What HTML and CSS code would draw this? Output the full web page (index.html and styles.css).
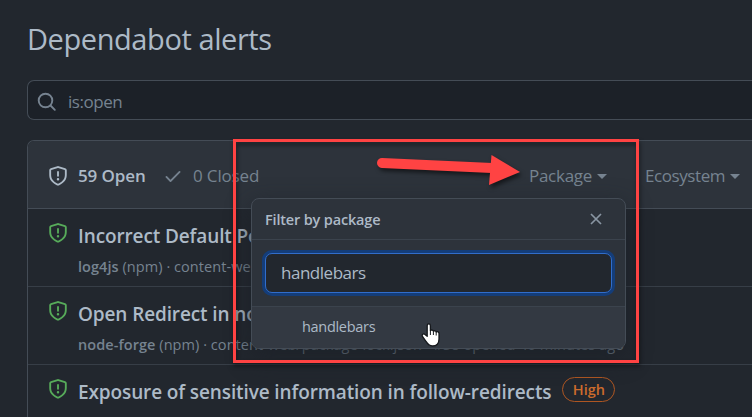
FILE: index.html
```html
<!DOCTYPE html>
<html lang="en">
<head>
<meta charset="utf-8">
<title>Dependabot alerts</title>
<link rel="stylesheet" href="styles.css">
</head>
<body>
<svg width="0" height="0" class="defs">
  <symbol id="shield" viewBox="0 0 16 16"><path d="M8.533.133a1.75 1.75 0 0 0-1.066 0l-5.25 1.68A1.75 1.75 0 0 0 1 3.48V7c0 1.566.32 3.182 1.303 4.682.983 1.498 2.585 2.813 5.032 3.855a1.697 1.697 0 0 0 1.33 0c2.447-1.042 4.049-2.357 5.032-3.855C14.68 10.182 15 8.566 15 7V3.48a1.75 1.75 0 0 0-1.217-1.667L8.533.133Zm-.61 1.429a.25.25 0 0 1 .153 0l5.25 1.68a.25.25 0 0 1 .174.238V7c0 1.358-.275 2.666-1.057 3.86-.784 1.194-2.121 2.34-4.366 3.297a.196.196 0 0 1-.154 0c-2.245-.956-3.582-2.104-4.366-3.298C2.775 9.666 2.5 8.36 2.5 7V3.48a.25.25 0 0 1 .174-.237l5.25-1.68ZM8.75 4.75a.75.75 0 0 0-1.5 0v3a.75.75 0 0 0 1.5 0v-3ZM9 10.5a1 1 0 1 1-2 0 1 1 0 0 1 2 0Z"/></symbol>
</svg>
<main class="page">
  <h1>Dependabot alerts</h1>
  <div class="search">
    <svg viewBox="0 0 20 20"><circle cx="8.500" cy="8.500" r="6.800"/><path d="M13.500 13.500l4.300 4.300"/></svg>
    <span>is:open</span>
  </div>
  <section class="card">
    <header class="bar">
      <svg class="shield"><use href="#shield"/></svg>
      <strong class="open">59 Open</strong>
      <svg class="check" viewBox="0 0 16 16"><path d="M13.78 4.22a.75.75 0 0 1 0 1.06l-7.25 7.25a.75.75 0 0 1-1.06 0L2.22 9.28a.75.75 0 0 1 1.06-1.06L6 10.94l6.72-6.72a.75.75 0 0 1 1.06 0Z"/></svg>
      <span class="closed">0 Closed</span>
      <nav class="filters">
        <span class="package">Package</span><i class="caret"></i>
        <span class="ecosystem">Ecosystem</span><i class="caret"></i>
      </nav>
    </header>
    <article class="row">
      <svg class="shield green"><use href="#shield"/></svg>
      <div>
        <h2>Incorrect Default Pe</h2>
        <p><b>log4js</b> (npm) · content-web</p>
      </div>
    </article>
    <article class="row">
      <svg class="shield green"><use href="#shield"/></svg>
      <div>
        <h2>Open Redirect in no</h2>
        <p><b>node-forge</b> (npm) · content-web/package-lock.json · #38 opened 46 minutes ago</p>
      </div>
    </article>
    <article class="row">
      <svg class="shield green"><use href="#shield"/></svg>
      <div class="titleline">
        <h2>Exposure of sensitive information in follow-redirects</h2>
        <span class="badge">High</span>
      </div>
    </article>
  </section>
</main>

<aside class="popover">
  <div class="pophead">
    <span>Filter by package</span>
    <svg viewBox="0 0 12 12"><path d="M1 1l10 10M11 1L1 11"/></svg>
  </div>
  <div class="field"><div class="input">handlebars</div></div>
  <div class="option">handlebars</div>
</aside>

<div class="frame"></div>
<svg class="arrow" viewBox="0 0 160 45">
  <path d="M12 13L122 18" stroke="#ff4343" stroke-width="10" stroke-linecap="round"/>
  <path d="M121.500 5L150 22L119 35Z" fill="#ff4343"/>
</svg>
<svg class="hand" viewBox="0 0 20 26">
  <path d="M6.200 12.500V3.700C6.200 1.300 9.400 1.300 9.400 3.700V8.500C10.400 7.600 12.100 8 12.400 9.200C13.400 8.300 15 8.800 15.200 10C16.500 9.300 18 10 18 11.500V17C18 21.500 15.500 24 11.500 24C7.500 24 6.300 21.500 4.600 18.800L1.500 14.500C.4 12.600 2.600 11.300 4 12.400L6.200 14.300Z"/>
  <path class="fingers" d="M9.400 8.500V13M12.400 9.200V13M15.200 10V13.500"/>
</svg>
</body>
</html>
```
FILE: styles.css
```css
* { box-sizing: border-box; }
html { overflow: hidden; }
body {
  margin: 0;
  width: 752px;
  height: 417px;
  overflow: hidden;
  position: relative;
  background: #22272e;
  color: #adbac7;
  font-family: "Open Sans", "Noto Sans", sans-serif;
}
.defs { position: absolute; }
h1, h2, p { margin: 0; white-space: nowrap; }
.page { height: 417px; padding: 16px 0 0 27px; overflow: hidden; }
h1 {
  height: 64px;
  font-size: 29px;
  font-weight: 400;
  line-height: 45px;
  letter-spacing: -0.42px;
}
.search {
  height: 40px;
  display: flex;
  align-items: center;
  padding-left: 9px;
  gap: 11px;
  border: 1px solid #444c56;
  border-right: 0;
  border-radius: 7px 0 0 7px;
  background: #1c2128;
  color: #768390;
  font-size: 17px;
  letter-spacing: -0.45px;
}
.search svg { width: 20px; height: 20px; margin-top: 4px; fill: none; stroke: #768390; stroke-width: 1.900; stroke-linecap: round; }
.search span { padding-top: 2px; }
.card {
  height: 320px;
  margin-top: 20px;
  border: 1px solid #444c56;
  border-right: 0;
  border-radius: 7px 0 0 7px;
}
.bar {
  display: flex;
  align-items: center;
  height: 68px;
  padding: 3px 0 0 20px;
  border-radius: 6px 0 0 0;
  border-bottom: 1px solid #444c56;
  background: #2d333b;
  color: #768390;
  font-size: 17px;
}
.bar > *, .filters > * { flex: none; white-space: nowrap; }
.open, .closed, .package, .ecosystem { padding-bottom: 2px; }
.shield { width: 20px; height: 20px; fill: #adbac7; flex: none; }
.green { fill: #57ab5a; }
.open { width: 85px; margin-left: 10px; color: #adbac7; font-weight: 600; letter-spacing: -0.1px; }
.check { width: 20px; height: 20px; fill: #768390; }
.closed { margin-left: 10px; width: 336px; letter-spacing: -0.15px; }
.filters { display: flex; align-items: center; letter-spacing: -0.28px; }
.package { width: 68px; }
.ecosystem { margin-left: 38px; width: 85px; letter-spacing: -0.42px; }
.caret { width: 10px; border: 5px solid transparent; border-top-color: #768390; border-bottom: 0; }
.row {
  display: flex;
  gap: 10px;
  height: 78px;
  padding: 14px 0 0 20px;
  border-bottom: 1px solid #373e47;
}
.row > div { margin-top: -1px; }
h2 { font-size: 19px; line-height: 28px; font-weight: 600; letter-spacing: -0.12px; }
.row p { margin-top: 6px; color: #768390; font-size: 14.500px; line-height: 22px; letter-spacing: 0.06px; }
.row p b { font-weight: 600; }
.titleline { display: flex; align-items: flex-start; gap: 11px; }
.badge {
  width: 53px;
  height: 25px;
  margin-top: -1px;
  border: 1px solid #ae5622;
  border-radius: 13px;
  color: #cc6b2c;
  font-size: 14.500px;
  line-height: 24px;
  font-weight: 600;
  text-align: center;
}
.popover {
  position: absolute;
  left: 251px;
  top: 198px;
  width: 375px;
  height: 151px;
  overflow: hidden;
  border: 1px solid #444c56;
  border-radius: 8px;
  background: #2d333b;
  box-shadow: 0 8px 24px rgba(28, 33, 40, .8);
}
.pophead {
  display: flex;
  justify-content: space-between;
  align-items: center;
  height: 41px;
  padding: 0 23px 0 13px;
  border-bottom: 1px solid #3b434d;
  font-size: 14.500px;
  font-weight: 600;
  letter-spacing: -0.17px;
}
.pophead svg { width: 12px; height: 12px; fill: none; stroke: #8995a2; stroke-width: 1.700; }
.field { height: 67px; padding: 13px; border-bottom: 1px solid #3b434d; }
.input {
  height: 40px;
  padding-left: 15px;
  border: 1px solid #316dca;
  border-radius: 7px;
  background: #22272e;
  box-shadow: 0 0 0 3px #143d79;
  font-size: 17px;
  line-height: 38px;
  letter-spacing: -0.48px;
}
.option {
  height: 41px;
  padding-left: 50px;
  background: #333942;
  font-size: 14.500px;
  line-height: 39px;
  letter-spacing: -0.3px;
}
.frame {
  position: absolute;
  left: 233px;
  top: 139px;
  width: 406px;
  height: 224px;
  border: 3px solid #ff4343;
  filter: drop-shadow(1px 3px 2px rgba(0, 0, 0, .5));
}
.arrow { position: absolute; left: 370px; top: 150px; width: 160px; height: 45px; fill: none; filter: drop-shadow(2px 3px 2px rgba(0, 0, 0, .55)); }
.hand { position: absolute; left: 421px; top: 322px; width: 20px; height: 26px; fill: #fff; stroke: #15181c; stroke-width: 1.300; stroke-linejoin: round; }
.fingers { fill: none; stroke-width: 1; }
```
